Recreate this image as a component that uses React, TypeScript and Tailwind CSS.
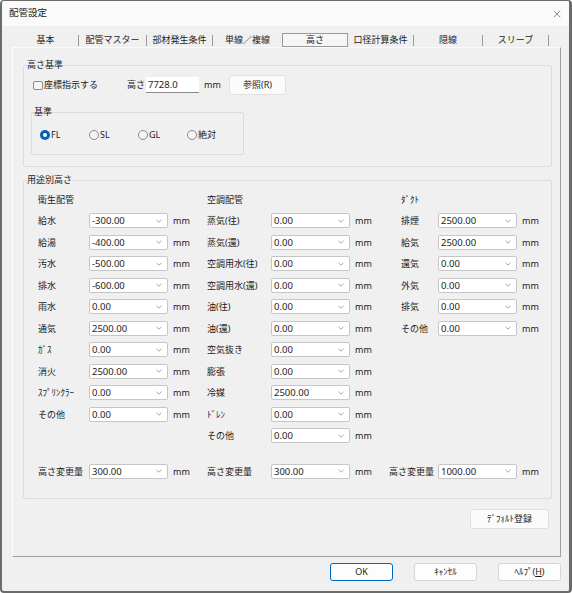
import { X } from "lucide-react";

const tabs = [
  { name: "基本", w: "w-[66px]", sep: true },
  { name: "配管マスター", w: "w-[68px]", sep: true },
  { name: "部材発生条件", w: "w-[66px]", sep: true },
  { name: "単線／複線", w: "w-[69px]", sep: false },
  { name: "高さ", w: "w-[66px]", active: true },
  { name: "口径計算条件", w: "w-[66px]", sep: true },
  { name: "隠線", w: "w-[69px]", sep: true },
  { name: "スリーブ", w: "w-[66px]", sep: true },
];

const eisei = [
  ["給水", "-300.00"],
  ["給湯", "-400.00"],
  ["汚水", "-500.00"],
  ["排水", "-600.00"],
  ["雨水", "0.00"],
  ["通気", "2500.00"],
  ["ｶﾞｽ", "0.00"],
  ["消火", "2500.00"],
  ["ｽﾌﾟﾘﾝｸﾗｰ", "0.00"],
  ["その他", "0.00"],
];

const kucho = [
  ["蒸気(往)", "0.00"],
  ["蒸気(還)", "0.00"],
  ["空調用水(往)", "0.00"],
  ["空調用水(還)", "0.00"],
  ["油(往)", "0.00"],
  ["油(還)", "0.00"],
  ["空気抜き", "0.00"],
  ["膨張", "0.00"],
  ["冷媒", "2500.00"],
  ["ﾄﾞﾚﾝ", "0.00"],
  ["その他", "0.00"],
];

const duct = [
  ["排煙", "2500.00"],
  ["給気", "2500.00"],
  ["還気", "0.00"],
  ["外気", "0.00"],
  ["排気", "0.00"],
  ["その他", "0.00"],
];

function Combo({ value }: { value: string }) {
  return (
    <div className="flex h-[15px] w-[79px] items-center justify-between rounded-[2px] border border-[#c6c6c6] bg-white pl-[2px] pr-[5px]">
      <span className="text-[9.5px] leading-none">{value}</span>
      <svg width="6" height="4" viewBox="0 0 6 4">
        <path d="M0.5 0.8 L3 3.2 L5.5 0.8" stroke="#8f8f8f" fill="none" strokeWidth="0.8" />
      </svg>
    </div>
  );
}

function Row({ label, value, lw }: { label: string; value: string; lw: string }) {
  return (
    <div className="flex h-[21.5px] items-center">
      <span className={lw}>{label}</span>
      <Combo value={value} />
      <span className="ml-[5px]">mm</span>
    </div>
  );
}

function Radio({ label, checked }: { label: string; checked?: boolean }) {
  return (
    <label className="flex w-[49px] items-center">
      {checked ? (
        <span className="flex h-[10px] w-[10px] items-center justify-center rounded-full bg-[#005fb8]">
          <span className="h-[4px] w-[4px] rounded-full bg-white" />
        </span>
      ) : (
        <span className="h-[10px] w-[10px] rounded-full border border-[#8a8a8a] bg-[#f6f6f6]" />
      )}
      <span className="ml-[1px]">{label}</span>
    </label>
  );
}

function Btn({ children, primary }: { children: React.ReactNode; primary?: boolean }) {
  return (
    <button
      className={
        primary
          ? "h-[18px] w-[63px] rounded-[3px] border border-[#0067c0] bg-[#fdfdfd]"
          : "h-[18px] w-[63px] rounded-[3px] border border-[#d5d5d5] bg-[#fdfdfd]"
      }
    >
      {children}
    </button>
  );
}

export default function App() {
  return (
    <div className="flex h-[593px] w-[572px] flex-col overflow-hidden rounded-[4px] border-t border-l-2 border-r-[3px] border-b-2 border-[#6b6b6b] bg-[#f0f0f0] font-['Noto_Sans','Noto_Sans_CJK_JP',sans-serif] text-[9px] text-[#1b1b1b]">
      {/* title bar */}
      <div className="flex h-[25px] items-center justify-between bg-[#fafafa] pl-[7px] pr-[6px]">
        <span className="text-[9.5px]">配管設定</span>
        <X size={12} strokeWidth={1.1} className="text-[#333]" />
      </div>

      <div className="flex flex-1 flex-col pl-[10px] pr-[8px] pt-[7px]">
        {/* tabs */}
        <div className="ml-[1px] flex h-[14px] items-center">
          {tabs.map((t) =>
            t.active ? (
              <div
                key={t.name}
                className={`${t.w} flex h-[14px] items-center justify-center border border-[#9a9a9a] bg-[#f6f6f6]`}
              >
                {t.name}
              </div>
            ) : (
              <div key={t.name} className={`${t.w} flex h-[14px] items-center`}>
                <span className="flex-1 text-center">{t.name}</span>
                {t.sep && <span className="h-[11px] w-px bg-[#9a9a9a]" />}
              </div>
            )
          )}
        </div>

        {/* panel */}
        <div className="flex h-[510px] flex-col border-t border-l border-r border-b border-t-[#fbfbfb] border-l-[#fbfbfb] border-r-[#a0a0a0] border-b-[#a0a0a0] bg-[#f0f0f0] pl-[10px] pr-[8px] pt-[10px]">
          <fieldset className="rounded-[2px] border border-[#dcdcdc] p-0">
            <legend className="ml-[3px] h-[14px] p-0 leading-[14px]">高さ基準</legend>
            <div className="pb-[11px] pl-[9px]">
              <div className="mt-[3px] flex h-[20px] items-center">
                <div className="flex w-[94px] items-center">
                  <span className="h-[9px] w-[10px] rounded-[2px] border border-[#8a8a8a] bg-[#f6f6f6]" />
                  <span className="ml-[1px]">座標指示する</span>
                </div>
                <span className="w-[19px]">高さ</span>
                <div className="flex h-[16px] w-[53px] items-center border-b border-b-[#8a8a8a] bg-white pl-[2px] text-[9.5px] leading-none">
                  7728.0
                </div>
                <span className="ml-[5px] w-[25px]">mm</span>
                <button className="h-[20px] w-[57px] rounded-[3px] border border-[#e0e0e0] bg-[#fbfbfb]">
                  参照(R)
                </button>
              </div>
              <fieldset className="-ml-[2px] mt-[10px] w-[213px] rounded-[2px] border border-[#dcdcdc] p-0">
                <legend className="ml-[2px] h-[14px] p-0 leading-[14px]">基準</legend>
                <div className="mt-[9px] flex h-[14px] items-center pl-[8px]">
                  <Radio label="FL" checked />
                  <Radio label="SL" />
                  <Radio label="GL" />
                  <Radio label="絶対" />
                </div>
                <div className="h-[12px]" />
              </fieldset>
            </div>
          </fieldset>

          <fieldset className="mt-[6px] rounded-[2px] border border-[#dcdcdc] p-0">
            <legend className="ml-[3px] h-[14px] p-0 leading-[14px]">用途別高さ</legend>
            <div className="pb-[16px] pl-[14px]">
              <div className="mt-[3px] flex h-[256.5px]">
                <div className="w-[169px]">
                  <div className="flex h-[20px] items-center">衛生配管</div>
                  {eisei.map(([l, v]) => (
                    <Row key={l} label={l} value={v} lw="w-[51px]" />
                  ))}
                </div>
                <div className="w-[182px]">
                  <div className="flex h-[20px] items-center">空調配管</div>
                  {kucho.map(([l, v]) => (
                    <Row key={l} label={l} value={v} lw="w-[64px]" />
                  ))}
                </div>
                <div className="pl-[12px]">
                  <div className="flex h-[20px] items-center">ﾀﾞｸﾄ</div>
                  {duct.map(([l, v]) => (
                    <Row key={l} label={l} value={v} lw="w-[37px]" />
                  ))}
                </div>
              </div>
              <div className="mt-[14px] flex">
                <div className="w-[169px]">
                  <Row label="高さ変更量" value="300.00" lw="w-[51px]" />
                </div>
                <div className="w-[182px]">
                  <Row label="高さ変更量" value="300.00" lw="w-[64px]" />
                </div>
                <div>
                  <Row label="高さ変更量" value="1000.00" lw="w-[49px]" />
                </div>
              </div>
            </div>
          </fieldset>

          <div className="mr-[3px] mt-[10px] flex justify-end">
            <button className="h-[20px] w-[79px] rounded-[3px] border border-[#e0e0e0] bg-[#fbfbfb]">
              ﾃﾞﾌｫﾙﾄ登録
            </button>
          </div>
        </div>

        {/* dialog buttons */}
        <div className="mt-[6px] flex justify-end gap-[21px]">
          <Btn primary>OK</Btn>
          <Btn>ｷｬﾝｾﾙ</Btn>
          <Btn>
            ﾍﾙﾌﾟ(<span className="underline">H</span>)
          </Btn>
        </div>
      </div>
    </div>
  );
}
